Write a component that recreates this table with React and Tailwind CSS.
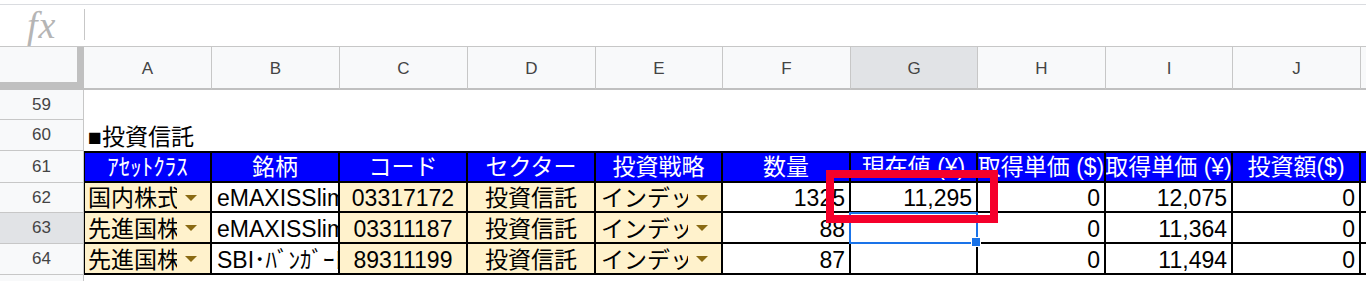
import React from "react";

const FONT = "font-['Liberation_Sans','Noto_Sans_CJK_JP',sans-serif]";

const COLS = [
  { letter: "A", w: "w-[128px]" },
  { letter: "B", w: "w-[128px]" },
  { letter: "C", w: "w-[128px]" },
  { letter: "D", w: "w-[128px]" },
  { letter: "E", w: "w-[127px]" },
  { letter: "F", w: "w-[128px]" },
  { letter: "G", w: "w-[127px]" },
  { letter: "H", w: "w-[128px]" },
  { letter: "I", w: "w-[127px]" },
  { letter: "J", w: "w-[128px]" },
];

const HEADERS = [
  "ｱｾｯﾄｸﾗｽ",
  "銘柄",
  "コード",
  "セクター",
  "投資戦略",
  "数量",
  "現在値 (¥)",
  "取得単価 ($)",
  "取得単価 (¥)",
  "投資額($)",
];

const ROWS = [
  {
    n: 62,
    h: "h-[30px]",
    cells: ["国内株式", "eMAXISSlim国内株式(TOPIX)", "03317172", "投資信託", "インデックス", "1325", "11,295", "0", "12,075", "0"],
  },
  {
    n: 63,
    h: "h-[31px]",
    sel: true,
    cells: ["先進国株式", "eMAXISSlim先進国株式インデックス", "03311187", "投資信託", "インデックス", "88", "", "0", "11,364", "0"],
  },
  {
    n: 64,
    h: "h-[31px]",
    cells: ["先進国株式", "SBI･ﾊﾞﾝｶﾞｰﾄﾞ･S&P500ｲﾝﾃﾞｯｸｽ", "89311199", "投資信託", "インデックス", "87", "", "0", "11,494", "0"],
  },
];

function Arrow() {
  return (
    <span className="shrink-0 w-0 h-0 border-l-[6px] border-r-[6px] border-t-[6px] border-l-transparent border-r-transparent border-t-[#8a6a12]" />
  );
}

function RowHeader({ n, h, active, extra = "" }) {
  return (
    <div
      className={`${h} w-[84px] shrink-0 flex items-center justify-center border-r border-b border-[#c7c7c7] text-[17px] text-[#444] ${
        active ? "bg-[#e1e3e6]" : "bg-[#f8f9fa]"
      } ${extra}`}
    >
      {n}
    </div>
  );
}

function DataCell({ value, idx }) {
  const w = COLS[idx].w;
  const base = `${w} shrink-0 h-full border-r-2 border-b-2 border-black flex items-center overflow-hidden whitespace-nowrap text-[23px] leading-[26px] text-black pt-[2px]`;
  if (idx === 0 || idx === 4) {
    return (
      <div className={`${base} bg-[#fff2cc] ${idx === 0 ? "border-l border-l-black pl-[3px]" : "pl-[5px]"}`}>
        <div className="flex-1 overflow-hidden">{value}</div>
        <span className="ml-[8px] mr-[13px] mt-[-1px] flex">
          <Arrow />
        </span>
      </div>
    );
  }
  if (idx === 2 || idx === 3) {
    return <div className={`${base} bg-[#fff2cc] justify-center`}>{value}</div>;
  }
  if (idx === 1) {
    return <div className={`${base} bg-white pl-[5px]`}>{value}</div>;
  }
  return <div className={`${base} bg-white justify-end pr-[4px]`}>{value}</div>;
}

export default function App() {
  return (
    <div className={`relative w-[1366px] h-[281px] overflow-hidden bg-white ${FONT}`}>
      {/* top strip */}
      <div className="h-[4px] bg-white" />
      <div className="h-[1px] bg-[#dadce0]" />
      {/* formula bar */}
      <div className="h-[42px] flex items-center border-b border-[#c7c7c7]">
        <div className="w-[84px] h-full flex items-center pl-[27px] pb-[2px]">
          <span className="font-['Liberation_Serif',serif] italic text-[38px] leading-none tracking-[1px] text-[#b5b5b5]">fx</span>
        </div>
        <div className="w-[1px] h-[31px] bg-[#c7c7c7] mb-[2px]" />
      </div>
      {/* column header row */}
      <div className="flex h-[43px]">
        <div className="relative w-[84px] shrink-0 h-full bg-[#f8f9fa]">
          <div className="absolute right-0 top-0 w-[7px] h-full bg-[#c0c0c0]" />
          <div className="absolute left-0 bottom-0 w-full h-[8px] bg-[#c0c0c0]" />
        </div>
        {COLS.map((c) => (
          <div
            key={c.letter}
            className={`${c.w} shrink-0 h-full flex items-center justify-center border-r border-b-2 border-r-[#c7c7c7] border-b-[#c0c0c0] text-[17px] text-[#444] pt-[2px] ${
              c.letter === "G" ? "bg-[#e1e3e6]" : "bg-[#f8f9fa]"
            }`}
          >
            {c.letter}
          </div>
        ))}
        <div className="flex-1 h-full bg-[#f8f9fa] border-b-2 border-b-[#c0c0c0]" />
      </div>

      {/* row 59 */}
      <div className="flex h-[30px]">
        <RowHeader n={59} h="h-[30px]" />
        <div className="flex-1 bg-white" />
      </div>
      {/* row 60 */}
      <div className="flex h-[31px]">
        <RowHeader n={60} h="h-[31px]" />
        <div className="flex-1 bg-white flex items-end pl-[4px] pb-[1px] text-[23px] leading-[26px] text-black whitespace-nowrap">
          ■投資信託
        </div>
      </div>
      {/* row 61 header */}
      <div className="flex h-[32px]">
        <RowHeader n={61} h="h-[32px]" />
        <div className="flex flex-1 h-full border-t-2 border-black">
          {HEADERS.map((t, i) => (
            <div
              key={i}
              className={`${COLS[i].w} shrink-0 h-full bg-[#0000ff] text-white border-r-2 border-b-2 border-black flex items-center justify-center overflow-hidden whitespace-nowrap text-[23px] leading-[26px] ${
                i === 0 ? "border-l border-l-black" : ""
              }`}
            >
              {t}
            </div>
          ))}
          <div className="flex-1 h-full bg-[#0000ff] border-b-2 border-black" />
        </div>
      </div>
      {/* data rows */}
      {ROWS.map((r) => (
        <div key={r.n} className={`flex ${r.h}`}>
          <RowHeader n={r.n} h={r.h} active={r.sel} />
          <div className="flex flex-1 h-full">
            {r.cells.map((v, i) => (
              <DataCell key={i} idx={i} value={v} />
            ))}
            <div className="flex-1 h-full bg-white border-b-2 border-black" />
          </div>
        </div>
      ))}
      <div className="flex h-[10px]">
        <RowHeader n="" h="h-[10px]" extra="border-b-0" />
        <div className="flex-1 bg-white" />
      </div>

      {/* selection on G63 */}
      <div className="absolute left-[849px] top-[212px] w-[129px] h-[32px] border-2 border-[#1a73e8] pointer-events-none" />
      <div className="absolute left-[971px] top-[237px] w-[10px] h-[10px] bg-[#1a73e8] border border-white pointer-events-none" />

      {/* red annotation rectangle */}
      <div className="absolute left-[826px] top-[170px] w-[172px] h-[53px] border-[8px] border-[#f5002b] pointer-events-none" />
    </div>
  );
}
